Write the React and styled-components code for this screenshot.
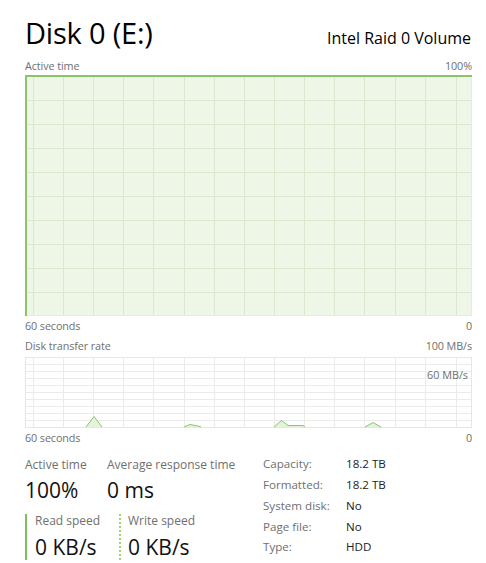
import React from 'react'
import styled, { createGlobalStyle } from 'styled-components'

const GlobalStyle = createGlobalStyle`
  html, body {
    margin: 0;
    background: #ffffff;
  }
  body {
    font-family: "Open Sans", "Noto Sans", sans-serif;
    color: #000;
  }
`

const GRID_X = [8, 38, 68, 98, 128, 159, 189, 219, 249, 279, 309, 339, 370, 400, 431]

const Page = styled.div`
  width: 447px;
  padding: 15px 14px 0 25px;
`

const Header = styled.div`
  display: flex;
  justify-content: space-between;
  align-items: baseline;
  height: 44px;
`

const Title = styled.h1`
  margin: 0;
  font-size: 29px;
  font-weight: 400;
  line-height: 36px;
  letter-spacing: -0.2px;
`

const Model = styled.div`
  font-size: 16px;
  line-height: 20px;
  margin-right: 1px;
`

const AxisRow = styled.div`
  display: flex;
  justify-content: space-between;
  font-size: 10.8px;
  line-height: 14px;
  height: ${(p) => p.h || 14}px;
  margin-top: ${(p) => p.mt || 0}px;
  color: #6f6f6f;
  letter-spacing: -0.1px;
`

const ChartBox = styled.div`
  position: relative;
  height: ${(p) => p.h}px;
  margin-top: ${(p) => p.mt || 0}px;
  & > svg {
    display: block;
    width: 100%;
    height: 100%;
  }
`

const InnerLabel = styled.span`
  position: absolute;
  right: 4px;
  top: 11px;
  font-size: 10.8px;
  line-height: 14px;
  color: #6f6f6f;
`

const Stats = styled.div`
  display: grid;
  grid-template-columns: 238px 1fr;
  margin-top: 13px;
`

const LeftStats = styled.div`
  display: grid;
  grid-template-columns: 82px 1fr;
  row-gap: 11px;
`

const Metric = styled.div`
  display: flex;
  flex-direction: column;
  padding-left: ${(p) => (p.bar === 'solid' ? 8 : p.bar === 'dotted' ? 7 : 0)}px;
  border-left: ${(p) =>
    p.bar === 'solid' ? '2px solid #7fbf5a' : p.bar === 'dotted' ? '2px dotted #a3d474' : 'none'};
  margin-left: ${(p) => (p.bar === 'dotted' ? '12px' : '0')};
`

const MetricLabel = styled.span`
  font-size: 12px;
  line-height: 14px;
  color: #6f6f6f;
  white-space: nowrap;
`

const MetricValue = styled.span`
  font-size: 21px;
  line-height: 26px;
  margin-top: ${(p) => p.gap || 5}px;
  color: #111;
  white-space: nowrap;
`

const Props = styled.div`
  display: grid;
  grid-template-columns: 83px 1fr;
  grid-auto-rows: 20.75px;
  align-items: center;
  margin-top: -4px;
  font-size: 11.6px;
  line-height: 14px;
`

const PropKey = styled.span`
  color: #6f6f6f;
`

const PropVal = styled.span`
  color: #222;
`

const ActiveChart = () => {
  const w = 447
  const h = 241
  const rows = Array.from({ length: 9 }, (_, i) => 1 + (i + 1) * 24)
  return (
    <svg viewBox={`0 0 ${w} ${h}`} preserveAspectRatio="none">
      <rect x="0" y="0" width={w} height={h} fill="#eef6e8" />
      {GRID_X.map((x) => (
        <line key={x} x1={x + 0.5} y1="0" x2={x + 0.5} y2={h} stroke="#d9e8cf" strokeWidth="1" />
      ))}
      {rows.map((y) => (
        <line key={y} x1="0" y1={y + 0.5} x2={w} y2={y + 0.5} stroke="#d9e8cf" strokeWidth="1" />
      ))}
      <rect x="0.5" y="0.5" width={w - 1} height={h - 1} fill="none" stroke="#e3eedc" />
      <line x1="0" y1="1" x2={w} y2="1" stroke="#8cc46a" strokeWidth="2" />
      <line x1="1" y1="0" x2="1" y2={h} stroke="#8cc46a" strokeWidth="2" />
    </svg>
  )
}

const TransferChart = () => {
  const w = 447
  const h = 71
  const rows = Array.from({ length: 9 }, (_, i) => Math.round((i + 1) * 7.05))
  const peaks = [
    [[61, 70], [69, 59.5], [77, 70]],
    [[159, 70], [165, 67.5], [173, 69], [176, 70]],
    [[249, 70], [256.5, 63.5], [263, 68.5], [278, 68.5], [280, 70]],
    [[340, 70], [348, 65.5], [356, 70]],
  ]
  return (
    <svg viewBox={`0 0 ${w} ${h}`} preserveAspectRatio="none">
      <rect x="0" y="0" width={w} height={h} fill="#ffffff" />
      {GRID_X.map((x) => (
        <line key={x} x1={x + 0.5} y1="0" x2={x + 0.5} y2={h} stroke="#ebebeb" strokeWidth="1" />
      ))}
      {rows.map((y) => (
        <line key={y} x1="0" y1={y + 0.5} x2={w} y2={y + 0.5} stroke="#ebebeb" strokeWidth="1" />
      ))}
      <rect x="0.5" y="0.5" width={w - 1} height={h - 1} fill="none" stroke="#e6e6e6" />
      {peaks.map((pts, i) => (
        <g key={i}>
          <polygon points={pts.map((p) => p.join(',')).join(' ')} fill="#e6f3dc" />
          <polyline
            points={pts.map((p) => p.join(',')).join(' ')}
            fill="none"
            stroke="#8cc46a"
            strokeWidth="1"
          />
        </g>
      ))}
    </svg>
  )
}

export default function App() {
  return (
    <>
      <GlobalStyle />
      <Page>
        <Header>
          <Title>Disk 0 (E:)</Title>
          <Model>Intel Raid 0 Volume</Model>
        </Header>

        <AxisRow h={16}>
          <span>Active time</span>
          <span>100%</span>
        </AxisRow>
        <ChartBox h={241}>
          <ActiveChart />
        </ChartBox>
        <AxisRow mt={3}>
          <span>60 seconds</span>
          <span>0</span>
        </AxisRow>

        <AxisRow mt={6}>
          <span>Disk transfer rate</span>
          <span>100 MB/s</span>
        </AxisRow>
        <ChartBox h={71} mt={4}>
          <TransferChart />
          <InnerLabel>60 MB/s</InnerLabel>
        </ChartBox>
        <AxisRow mt={3}>
          <span>60 seconds</span>
          <span>0</span>
        </AxisRow>

        <Stats>
          <LeftStats>
            <Metric>
              <MetricLabel>Active time</MetricLabel>
              <MetricValue>100%</MetricValue>
            </Metric>
            <Metric>
              <MetricLabel>Average response time</MetricLabel>
              <MetricValue>0 ms</MetricValue>
            </Metric>
            <Metric bar="solid">
              <MetricLabel>Read speed</MetricLabel>
              <MetricValue gap={6}>0 KB/s</MetricValue>
            </Metric>
            <Metric bar="dotted">
              <MetricLabel>Write speed</MetricLabel>
              <MetricValue gap={6}>0 KB/s</MetricValue>
            </Metric>
          </LeftStats>
          <Props>
            <PropKey>Capacity:</PropKey>
            <PropVal>18.2 TB</PropVal>
            <PropKey>Formatted:</PropKey>
            <PropVal>18.2 TB</PropVal>
            <PropKey>System disk:</PropKey>
            <PropVal>No</PropVal>
            <PropKey>Page file:</PropKey>
            <PropVal>No</PropVal>
            <PropKey>Type:</PropKey>
            <PropVal>HDD</PropVal>
          </Props>
        </Stats>
      </Page>
    </>
  )
}
